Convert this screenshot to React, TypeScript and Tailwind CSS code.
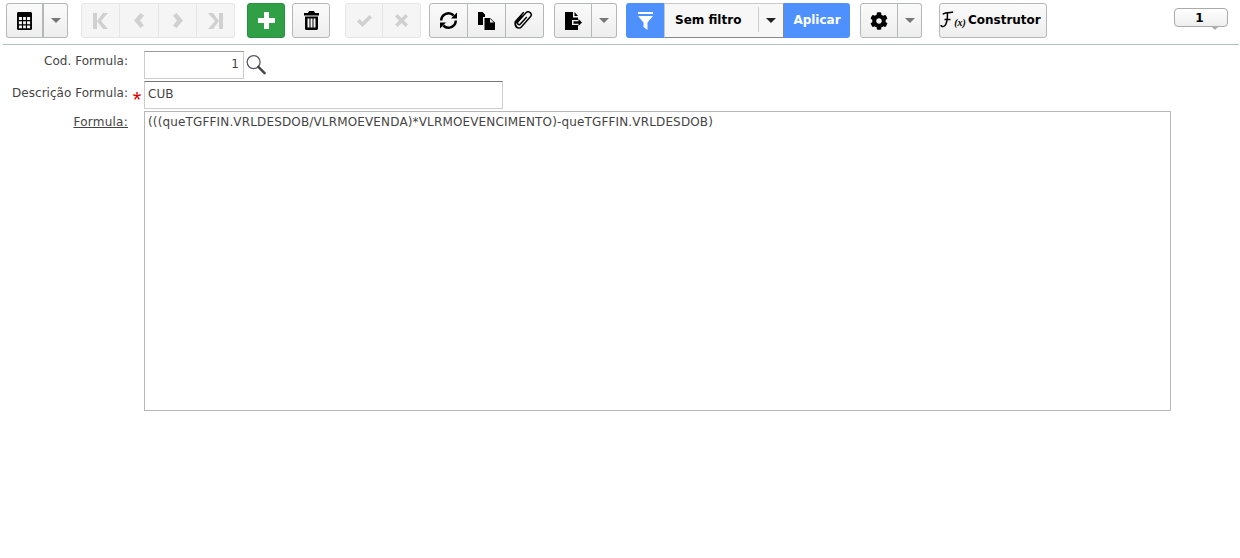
import { FaCog } from "react-icons/fa"

const uiFont = "font-['DejaVu_Sans',Verdana,sans-serif]"
const btn = "flex h-[35px] items-center justify-center bg-gradient-to-b from-[#fafafa] to-[#eeeeee] border border-[#b4b8b8] text-black"
const off = "flex h-[35px] items-center justify-center bg-[#f5f5f5] border border-[#e6e6e6] text-[#d0d0d0]"

const Caret = ({ color = "#777" }: { color?: string }) => (
  <svg width="10" height="5" viewBox="0 0 10 5"><path d="M0 0h10L5 5z" fill={color} /></svg>
)

const GridIcon = () => (
  <svg width="15" height="18" viewBox="0 0 16 18" preserveAspectRatio="none">
    <path fillRule="evenodd" fill="#000" d="M1.500 0h13c.8 0 1.500.7 1.500 1.500v15c0 .8-.7 1.500-1.500 1.500h-13C.7 18 0 17.300 0 16.500v-15C0 .7.7 0 1.500 0zM2 5v3h3.300V5zm4.500 0v3h3V5zm4.200 0v3H14V5zM2 9.200v3h3.300v-3zm4.500 0v3h3v-3zm4.200 0v3H14v-3zM2 13.400v2.800h3.300v-2.800zm4.500 0v2.800h3v-2.800zm4.200 0v2.800H14v-2.800z" />
  </svg>
)

const First = () => (
  <svg width="15" height="16" viewBox="0 0 15 16" fill="currentColor"><path d="M0 0h4v16H0zM15 0 8 8l7 8H10L4 8l6-8z" /></svg>
)
const Prev = () => (
  <svg width="10" height="15" viewBox="0 0 10 15" fill="currentColor"><path d="M6.500 0 0 7.500 6.500 15 10 12.500 6 7.500l4-5z" /></svg>
)
const Next = () => (
  <svg width="10" height="15" viewBox="0 0 10 15" fill="currentColor"><path d="M3.500 0 10 7.500 3.500 15 0 12.500l4-5-4-5z" /></svg>
)
const Last = () => (
  <svg width="15" height="16" viewBox="0 0 15 16" fill="currentColor"><path d="M15 0h-4v16h4zM0 0l7 8-7 8h5l6-8-6-8z" /></svg>
)
const Check = () => (
  <svg width="15" height="12" viewBox="0 0 15 12" fill="currentColor"><path d="M0 6.500 2.500 4l3 3L12.500 0 15 2.500 5.500 12z" /></svg>
)
const Cross = () => (
  <svg width="13" height="13" viewBox="0 0 13 13" fill="currentColor"><path d="M2.500 0 6.500 4l4-4L13 2.500l-4 4 4 4-2.500 2.500-4-4-4 4L0 10.500l4-4-4-4z" /></svg>
)
const Plus = () => (
  <svg width="17" height="17" viewBox="0 0 17 17" fill="#fff"><path d="M6 0h5v6h6v5h-6v6H6v-6H0V6h6z" /></svg>
)

const Trash = () => (
  <svg width="15" height="19" viewBox="0 0 15 19" fill="#000">
    <path fillRule="evenodd" d="M5 0h5l1 2h4v2.500H0V2h4zM1 5.500h13v12c0 .8-.7 1.500-1.500 1.500h-10C1.700 19 1 18.300 1 17.500zM3.500 7.500v9H5.500v-9zm3 0v9h2v-9zm3 0v9h2v-9z" />
  </svg>
)

const Refresh = () => (
  <svg width="19" height="19" viewBox="0 0 19 19" fill="none" stroke="#000" strokeWidth="2.500">
    <path d="M2.200 9.500a7.300 7.300 0 0 1 12.500-5" />
    <path d="M16.800 9.500a7.300 7.300 0 0 1-12.500 5" />
    <path d="M18 1.500v6h-6z" fill="#000" stroke="none" />
    <path d="M1 17.500v-6h6z" fill="#000" stroke="none" />
  </svg>
)

const Copy = () => (
  <svg width="17" height="18" viewBox="0 0 17 18" fill="#000">
    <path d="M0 0h4.500L7 2.500V5H5v8H0z" />
    <path d="M6.500 6H12l5 4.500V18H6.500z" />
    <path d="M12 6.800 16 10.500h-4z" fill="#f2f2f2" />
  </svg>
)

const Clip = () => (
  <svg width="21" height="20" viewBox="0 0 21 20" fill="none" stroke="#000" strokeWidth="1.500">
    <g transform="rotate(42 10.500 10)">
      <path d="M10 6v9.500a1.700 1.700 0 0 1-3.400 0V3.500a3 3 0 0 1 6 0v13.500a3.500 3.500 0 0 1-7 0V8" transform="translate(-0.500 -0.500)" />
      <path d="M4 5v12.500a6 6 0 0 0 5 3" transform="translate(0 -1)" />
    </g>
  </svg>
)

const ExportIcon = () => (
  <svg width="17" height="18" viewBox="0 0 17 18" fill="#000">
    <path d="M0 0h8v5.500h5V8H7v5h6v5H0z" />
    <path d="M9.500 0 13 4H9.500z" />
    <path d="M8.500 9.300h5V7l3.500 3.500-3.500 3.500v-2.300h-5z" />
  </svg>
)

const Funnel = () => (
  <svg width="15" height="18" viewBox="0 0 15 18" fill="#fff">
    <path d="M0 0h15v2H0zM0 4h15L9.500 10.500V18L5.500 15v-4.500z" />
  </svg>
)

const FxMark = () => (
  <span className="flex items-end font-['Liberation_Serif',serif] font-normal italic leading-none">
    <svg width="14" height="17" viewBox="0 0 14 17" fill="none" stroke="#000" strokeWidth="1.500">
      <path d="M3 3.500C4 1 8 2.500 13 1" />
      <path d="M7.500 2C7.500 8 7 13 4.500 15 3 16 1 15.500 1 14" />
      <path d="M4.500 8.500h6" />
    </svg>
    <span className="text-[10px] font-bold">(x)</span>
  </span>
)

const Lens = () => (
  <svg width="20" height="21" viewBox="0 0 21 21" fill="none">
    <circle cx="8" cy="8" r="6.800" stroke="#556" strokeWidth="1.300" />
    <path d="m13 13 6.500 6.500" stroke="#444" strokeWidth="2.600" strokeLinecap="round" />
  </svg>
)

export default function App() {
  return (
    <div className={`${uiFont} min-h-[558px] bg-white text-[12px] text-[#444]`}>
      <div className="mx-[3px] mr-px flex h-[45px] items-start border-b border-[#b4c0c0] pt-[3px] pl-[3px]">
        <div className="flex">
          <button className={`${btn} w-[38px] rounded-l-[3px] border-r-[2px]`}><GridIcon /></button>
          <button className={`${btn} w-[24px] rounded-r-[3px] border-l-0`}><Caret /></button>
        </div>

        <div className="ml-[13px] flex">
          <button className={`${off} w-[39px] rounded-l-[3px]`}><First /></button>
          <button className={`${off} w-[39px] border-l-0`}><Prev /></button>
          <button className={`${off} w-[38px] border-l-0`}><Next /></button>
          <button className={`${off} w-[38px] rounded-r-[3px] border-l-0`}><Last /></button>
        </div>

        <button className="ml-[12px] flex h-[35px] w-[38px] items-center justify-center rounded-[3px] border border-[#2b8f3f] bg-[#30a046]">
          <Plus />
        </button>
        <button className={`${btn} ml-[7px] w-[38px] rounded-[3px]`}><Trash /></button>

        <div className="ml-[15px] flex">
          <button className={`${off} w-[38px] rounded-l-[3px]`}><Check /></button>
          <button className={`${off} w-[38px] rounded-r-[3px] border-l-0`}><Cross /></button>
        </div>

        <div className="ml-[8px] flex">
          <button className={`${btn} w-[39px] rounded-l-[3px]`}><Refresh /></button>
          <button className={`${btn} w-[38px] border-l-0`}><Copy /></button>
          <button className={`${btn} w-[38px] rounded-r-[3px] border-l-0`}><Clip /></button>
        </div>

        <div className="ml-[10px] flex">
          <button className={`${btn} w-[38px] rounded-l-[3px]`}><ExportIcon /></button>
          <button className={`${btn} w-[25px] rounded-r-[3px] border-l-0`}><Caret /></button>
        </div>

        <div className="ml-[9px] flex h-[35px]">
          <button className="flex w-[38px] items-center justify-center rounded-l-[3px] bg-[#4d90fe]"><Funnel /></button>
          <div className="flex w-[120px] items-center border border-[#c8c8c8] border-r-[#888] border-b-[#888] bg-[#f7f7f7] pb-[2px] pl-[10px] text-[12px] font-bold text-black">
            <span className="w-[83px]">Sem filtro</span>
            <span className="flex h-[25px] flex-1 items-center justify-center border-l border-[#ccc] pt-[1px]"><Caret color="#222" /></span>
          </div>
          <button className="w-[66px] rounded-r-[3px] bg-[#4d90fe] pb-[2px] text-[12px] font-bold text-white">Aplicar</button>
        </div>

        <div className="ml-[10px] flex">
          <button className={`${btn} w-[38px] rounded-l-[3px]`}><FaCog size={18} /></button>
          <button className={`${btn} w-[24px] rounded-r-[3px] border-l-0`}><Caret /></button>
        </div>

        <button className={`${btn} ml-[17px] w-[108px] gap-[2px] rounded-[3px] pb-[2px] pr-[5px] text-[12px] font-bold`}>
          <FxMark />
          Construtor
        </button>

        <div className="relative ml-[127px] mt-[5px] flex h-[19px] w-[54px] items-center justify-center rounded-[4px] border border-[#aaa] bg-gradient-to-b from-white to-[#eee] pr-[3px] pt-[1px] text-[12px] font-bold text-black">
          1
          <span className="absolute -bottom-[4px] right-[8px] h-0 w-0 border-x-[4px] border-t-[4px] border-x-transparent border-t-[#aaa]" />
        </div>
      </div>

      <div className="ml-[10px] mt-[6px] grid grid-cols-[118px_16px_auto] justify-start tracking-[0.03px]">
        <label className="pt-[1px] text-right">Cod. Formula:</label>
        <span />
        <div className="flex h-[29px] items-start">
          <input readOnly value="1" className="h-[28px] w-[100px] border border-[#ccc] border-t-[#999] px-[4px] pb-[3px] text-right text-[#444] outline-none" />
          <span className="ml-[2px] mt-[3px]"><Lens /></span>
        </div>

        <label className="mt-[1px] pt-[3px] text-right">Descrição Formula:</label>
        <span className="mt-[1px] pl-[2px] pt-[9px] text-center font-['Liberation_Sans',sans-serif] text-[22px] leading-[20px] text-[#d00]">*</span>
        <input readOnly value="CUB" className="mt-px h-[28px] w-[359px] border border-[#ccc] border-t-[#777] px-[3px] pb-[2px] text-[#444] outline-none" />

        <label className="mt-[1px] pt-[2px] text-right underline tracking-[0.25px]">Formula:</label>
        <span />
        <textarea
          readOnly
          value="(((queTGFFIN.VRLDESDOB/VLRMOEVENDA)*VLRMOEVENCIMENTO)-queTGFFIN.VRLDESDOB)"
          className="mt-[1px] h-[300px] w-[1027px] resize-none border border-[#b8b8b8] px-[3px] py-[1px] tracking-[0.15px] text-[#444] outline-none"
        />
      </div>
    </div>
  )
}
